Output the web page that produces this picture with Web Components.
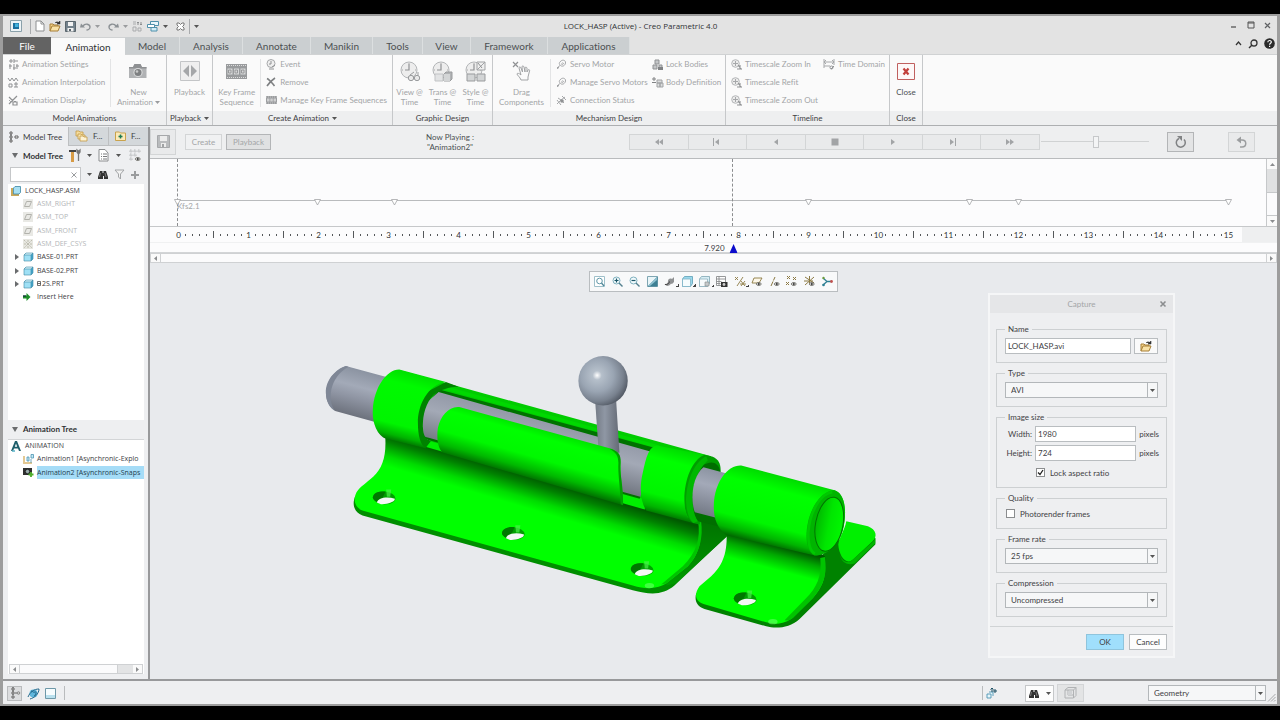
<!DOCTYPE html>
<html lang="en">
<head>
<meta charset="utf-8">
<title>LOCK_HASP (Active) - Creo Parametric 4.0</title>
<style>
html,body{margin:0;height:100%}
body{background:#000;font:8px/10px Lato,"Open Sans",sans-serif;font-variant-ligatures:none;color:#3e4144}
</style>
</head>
<body>
<creo-app></creo-app>
<script>
const RESET = `:host,*{box-sizing:border-box}button,input,select{font:inherit;color:inherit;margin:0;padding:0;border:0;border-radius:0;background:none;outline:0}button{cursor:default;white-space:nowrap}`;

function define(name, css, html) {
  customElements.define(name, class extends HTMLElement {
    connectedCallback() {
      if (this.shadowRoot) return;
      const root = this.attachShadow({ mode: 'open' });
      root.innerHTML = `<style>${RESET}${css}</style>${typeof html === 'function' ? html(this) : html}`;
    }
  });
}

/* ---------- icons: [width, height, svg body] ---------- */
const G = '#a6a8aa';
const clock = `<circle cx="9" cy="9" r="8" fill="#ededed" stroke="#b4b6b8"/><path d="M9 3v6H5" fill="none" stroke="#8f9193" stroke-width="1.2"/><path d="M9 2v1M9 15v1M2 9h1M15 9h1" stroke="#aaa"/>`;
const zoomT = `<circle cx="4.500" cy="4.500" r="3.800" fill="#ececec" stroke="#b4b6b8"/><path d="M2 4.500h5M4.500 2v5" stroke="#a6a8aa" fill="none"/><path d="M6 10h5M7 6l3.500 4.500M9 6v4" stroke="#8f9193" stroke-width="1.100"/>`;
const motor = `<path d="M4 3c2-3 6-2 5.500 1S6 8 4.500 6.500 3 4 4 3zM1 9l3-2.500M5.500 4.500c1-1 2-.5 2 0s-1 1.500-2 1" fill="none" stroke="${G}"/><path d="M1 9.500l2-1" stroke="#8f9193"/>`;
const partCube = `<path d="M1 3l2-2h7v6l-2 2H1z" fill="#45a9cf"/><path d="M1 3h7v6H1z" fill="#9fe0f5"/><path d="M1 3l2-2h7L8 3z" fill="#d5f4fc"/><path d="M1 3l2-2h7v6l-2 2H1zM1 3h7v6M8 3l2-2" fill="none" stroke="#3d86a3" stroke-width=".6"/>`;
const plane = `<path d="M0 0h10v10H0z" fill="#e9e9e5"/><path d="M3.500 2.500h5L6.500 7.500h-5z" fill="none" stroke="#b2b2ac"/>`;
const lens = s => `<circle cx="4.500" cy="4.500" r="3.500" fill="#f2fbfd" stroke="#7fb0bf"/><path d="M7 7l3.500 3.500" stroke="#54818f" stroke-width="1.400"/><path d="${s}" stroke="#1b5668" stroke-width="1.200"/>`;
const eye = (x, y) => `<g transform="translate(${x} ${y})"><path d="M0 2C1.500 0 4 0 5.500 2 4 4 1.500 4 0 2z" fill="#fff" stroke="#4a4a42" stroke-width=".8"/><circle cx="2.800" cy="2" r="1.100" fill="#333"/></g>`;
const folder = `<path d="M1 10V3h3l1 1h4v2" fill="#f4d389" stroke="#a77f36"/><path d="M1 10l2-5h8l-2 5z" fill="#f9e2a6" stroke="#a77f36"/><path d="M6 2c1-1.500 3-1.500 4.500 0M11 0v3H8z" stroke="#333" fill="#333" stroke-width=".6"/>`;
const binoc = `<path d="M2 2h2.500v2h1V2H8l2 6v2H6V7H5v3H0V8z" fill="#333"/><path d="M2.500 4l-1 4M7 4l1 4" stroke="#8a8a8a" stroke-width=".8"/>`;
const cam = `<path d="M1 5h4l1.500-3h6L14 5h4.500v11H1z" fill="#b0b2b4"/><path d="M1 5h4l1.500-3h6L14 5h4.500v1.500H1z" fill="#8e9092"/><circle cx="10" cy="10.500" r="4.600" fill="#d9dadb"/><circle cx="10" cy="10.500" r="3.500" fill="#7e8082"/><circle cx="9" cy="9.500" r="1.300" fill="#c9cacb"/>`;
const ICONS = {
  app: [12, 12, `<path d="M.5.5h11v11H.5z" fill="#eef4f7" stroke="#8aa0aa"/><path d="M3 3h6v6H3z" fill="#1b6f9e"/><path d="M5 3.500h3.500V7H5z" fill="#43b3de"/>`],
  new: [10, 12, `<path d="M1 1h5l3 3v7H1z" fill="#fff" stroke="#8d8f91"/><path d="M6 1v3h3" fill="none" stroke="#8d8f91"/>`],
  folder: [12, 11, folder],
  save: [11, 11, `<path d="M.5.5h10v10H.500z" fill="#74828c" stroke="#5b666d"/><path d="M3 1h5v4H3zM2.500 7h6v3.500h-6z" fill="#f2f2f2"/><path d="M4 8h2v2H4z" fill="#5b666d"/>`],
  saveoff: [13, 13, `<path d="M.5.5h12v12H.500z" fill="#b9bbbd" stroke="#a6a8aa"/><path d="M3 1h7v5H3zM4 8h5v4H4z" fill="#ececec"/><path d="M5 9h2v3H5z" fill="#a0a2a4"/>`],
  undo: [11, 9, `<path d="M3 4C5 1 10 2 10 5c0 2-2 3-3.500 3" fill="none" stroke="#8b9094" stroke-width="1.400"/><path d="M0 4h5L1 0z" fill="#8b9094" transform="translate(0 1.500)"/>`],
  redo: [11, 9, `<path d="M8 4C6 1 1 2 1 5c0 2 2 3 3.500 3" fill="none" stroke="#8b9094" stroke-width="1.400"/><path d="M11 5.500H6L10 1.500z" fill="#8b9094"/>`],
  regen: [11, 11, `<path d="M1 1h3M1 3h3M1 6h3v4H1zM6 7h3v3H6z" stroke="#a9abad" fill="none"/><path d="M6 4V1M5 2l1-1 1 1M9 1v3M8 3l1 1 1-1" stroke="#8b8d8f" fill="none"/>`],
  windows: [12, 11, `<path d="M3.500.500h8v4h-8z" fill="#eaf6fb" stroke="#4f90ab"/><path d="M.5 3.500h7v3h-7z" fill="#fff" stroke="#4f90ab"/><path d="M4 6.500h6V10H4z" fill="#d2edf7" stroke="#4f90ab"/>`],
  closewin: [9, 9, `<path d="M1 3V1h2l1.500 1.500L6 1h2v2L6.500 4.500 8 6v2H6L4.500 6.500 3 8H1V6l1.500-1.500z" fill="#fff" stroke="#777"/>`],
  caret: [5, 3, `<path d="M0 0h5L2.500 3z" fill="#555"/>`],
  caretoff: [5, 3, `<path d="M0 0h5L2.500 3z" fill="#9a9c9e"/>`],
  min: [8, 8, `<path d="M1 6h5" stroke="#555" stroke-width="1.300"/>`],
  max: [8, 8, `<path d="M1 1h6v6H1zM1 2h6" fill="none" stroke="#555"/>`],
  x: [7, 7, `<path d="M1 1l5 5M6 1L1 6" stroke="#606264" stroke-width="1.200"/>`],
  xthin: [6, 6, `<path d="M.5.500l5 5M5.500.500l-5 5" stroke="#9a9c9e"/>`],
  xbold: [6, 6, `<path d="M.5.500l5 5M5.500.500l-5 5" stroke="#8b8d8f" stroke-width="1.600"/>`],
  up: [7, 5, `<path d="M1 4l2.500-3L6 4" fill="none" stroke="#333" stroke-width="1.200"/>`],
  lens: [10, 10, `<circle cx="6" cy="4" r="3" fill="none" stroke="#333" stroke-width="1.300"/><path d="M4 6L1 9" stroke="#333" stroke-width="1.500"/>`],
  help: [11, 11, `<circle cx="5.500" cy="5.500" r="5.300" fill="#2b2b2b"/><path d="M3.800 4.300c0-2.400 3.500-2.300 3.500-.3 0 1.300-1.700 1.300-1.700 2.700M5.600 7.700v1.300" fill="none" stroke="#fff" stroke-width="1.200"/>`],
  settings: [11, 11, `<path d="M1 2h4M3 0v4M6 0v4M6 2h4M2 5v5M1 7h3M6 5v6M5 9h3M9 5v5M8 7h3" stroke="#8f9193" fill="none"/>`],
  interp: [11, 11, `<path d="M0 1l2 3 2-3 2 3 2-3 2 3M1 7h3v3H1zM6 7h4M6 10h4M8 5v5" stroke="#8f9193" fill="none"/>`],
  display: [11, 11, `<path d="M1 9l8-8M1 2l4 4M5 10V7h4v3zM6 6.500h2" stroke="#8f9193" fill="none" stroke-width="1.200"/><path d="M1 5l2 2" stroke="${G}"/>`],
  camera: [20, 18, cam],
  playback: [20, 20, `<path d="M.5.5h19v19H.500z" fill="#efefef" stroke="#c3c5c7"/><path d="M9 4v12L3 10zM11 4v12l6-6z" fill="#a5a7a9"/>`],
  keyframes: [21, 15, `<path d="M0 0h21v15H0z" fill="#999b9d"/><path d="M1 1.500h19M1 13.500h19" stroke="#ddd" stroke-dasharray="1 1"/><path d="M1.500 4.500h5v6h-5zM8 4.500h5v6H8zM14.500 4.500h5v6h-5z" fill="#d6d7d8"/><path d="M2.500 6h2.500v3H2.500zM9 6h2.500v3H9zM15.500 6H18v3h-2.500z" fill="none" stroke="#8a8c8e" stroke-width=".8"/>`],
  event: [11, 11, `<circle cx="5" cy="4.500" r="4" fill="#efefef" stroke="${G}"/><path d="M5 2v3H3M3 10h5M6 8l3-2" stroke="#8f9193" fill="none"/>`],
  remove: [10, 10, `<path d="M1 1.500C4 3 6 6 8.500 9M9 1C6 3 3 6 1 9" stroke="#7e8082" stroke-width="1.600" fill="none"/>`],
  managekf: [11, 8, `<path d="M0 0h11v8H0z" fill="#9b9d9f"/><path d="M1 2.500h2.500v3H1zM4.300 2.500h2.500v3H4.300zM7.600 2.500H10v3H7.600z" fill="#cfd0d1"/><path d="M0 1h11M0 7h11" stroke="#c5c6c7" stroke-dasharray="1 1"/>`],
  viewtime: [20, 21, clock + `<circle cx="11" cy="17" r="2.700" fill="#e9e9e9" stroke="#999b9d"/><circle cx="17" cy="17" r="2.700" fill="#e9e9e9" stroke="#999b9d"/><path d="M10 14l4-3M18 14v-3" stroke="#999b9d" fill="none"/>`],
  transtime: [21, 21, clock + `<path d="M3 13h8v7H3z" fill="#e2e3e4" stroke="#c1c3c5"/><path d="M12 13l2-2h6v7l-2 2h-6z" fill="#b1b3b5" stroke="#999b9d"/><path d="M12 13h6v7h-6z" fill="#d3d5d6"/>`],
  styletime: [21, 21, clock + `<path d="M12 1h8v8h-8zM12 9l8-8" fill="#efefef" stroke="#a1a3a5"/><path d="M2 13h8v7H2zM12 13h8v7h-8z" fill="#d3d5d6" stroke="#999b9d"/><path d="M13 2l4 5" stroke="#8f9193"/>`],
  drag: [19, 20, `<path d="M1 1l5 5M6 1L1 6" stroke="#8f9193" stroke-width="1.200"/><path d="M9 19c-1-3-4-5-4-6s2-1 4 1L7 7c0-1.500 1.500-1.500 2 0l1.500 4L10 6c0-1.500 1.500-1.500 2 0l1 5 0-4c.500-1.500 1.500-1 2 0v4l1-2c1-1 2 0 1.500 1L16 16v3z" fill="#fbfbfb" stroke="#a1a3a5"/>`],
  motor: [11, 10, motor],
  connect: [11, 11, `<path d="M1 9l4-4 4-3M2 3l3 2 3 3M6 1l4 4M1 5l4 5" stroke="${G}" fill="none"/><circle cx="6" cy="6" r="1.800" fill="#8f9193"/>`],
  lockb: [11, 11, `<path d="M3 1h4v4H3zM1 6h4v4H1zM7 6h3v3H7z" fill="#c4c6c8" stroke="#8f9193"/><path d="M6 8h5v3H6z" fill="#808284"/>`],
  bodydef: [11, 11, `<path d="M2 0v4M0 2h4M0 5.500h4" stroke="#808284"/><path d="M5 3h5v3H5zM5 6h3v4H5zM8 6h3v4H8z" fill="#dcdddd" stroke="#a1a3a5"/>`],
  zoomt: [11, 11, zoomT],
  domain: [12, 11, `<path d="M1 0v9M11 0v6M1 3h10M3 1L1 3l2 2M9 1l2 2-2 2M1 7h6" stroke="${G}" fill="none"/><path d="M8 10l3-3" stroke="#8f9193"/><circle cx="8.500" cy="8.500" r="1.500" fill="none" stroke="#8f9193"/>`],
  closered: [18, 17, `<path d="M.5.5h17v16H.500z" fill="#fdf8f8" stroke="#c0605f"/><path d="M6.500 5.500l5 6M11.500 5.500l-5 6" stroke="#c2403c" stroke-width="2.200"/>`],
  modeltab: [10, 12, `<path d="M1 1h2v2H1zM1 5h2v2H1zM1 9h2v2H1zM6 5h3v2H6zM2 3v2M2 7v2" fill="#fff" stroke="#555" stroke-width=".9"/>`],
  layers: [13, 12, `<path d="M1 1h3l1 1h3v4H1z" fill="#f5dc9c" stroke="#c39a45" stroke-width=".8"/><path d="M3 4h3l1 1h3v4H3z" fill="#f9e6b4" stroke="#c39a45" stroke-width=".8"/><path d="M5 6h3l1 1h3v4H5z" fill="#fdf2d2" stroke="#c39a45" stroke-width=".8"/>`],
  fav: [11, 10, `<path d="M.5 1h4l1 1h5v7.500H.500z" fill="#fbeab8" stroke="#c9a24c"/><path d="M5.500 3.500v4M3.500 5.500h4" stroke="#1d7a52" stroke-width="1.500"/>`],
  tools: [12, 13, `<path d="M0 3V1h7v2z" fill="#444"/><path d="M2 3h3v10H2z" fill="#d79b45"/><path d="M9.500 12V5L8 3V1l1.500 1.500L11 1v2L9.500 5" fill="#777" stroke="#777" stroke-width="1.300"/>`],
  filt: [12, 13, `<path d="M1 .5h6L10 4v8H1z" fill="#fff" stroke="#8b8d8f"/><path d="M3 5h1M5 5h4M3 7.500h1M5 7.500h4M3 10h1M5 10h4" stroke="#6a6c6e" stroke-width=".9"/>`],
  treecfg: [13, 13, `<path d="M1 1h2v2H1zM1 5h2v2H1zM1 9h2v2H1zM5 1h2v2H5zM9 1h2v2H9zM5 5h2v2H5z" fill="none" stroke="#aaacae" stroke-width=".8" stroke-dasharray="1 .5"/>${eye(6, 8)}`],
  binoc: [10, 11, binoc],
  funnel: [11, 11, `<path d="M1 1h9L6.500 5v5l-2-2V5z" fill="#f2f2f2" stroke="#a3a5a7"/>`],
  plus: [8, 8, `<path d="M4 0v8M0 4h8" stroke="#9a9c9e" stroke-width="2"/>`],
  asm: [10, 10, `<path d="M1 2v7h7" fill="none" stroke="#c9a85a" stroke-width="2"/><path d="M2.500 2l1.500-1.500h5.500v6L8 8H2.500z" fill="#a7dff2" stroke="#3d86a3" stroke-width=".8"/>`],
  plane: [10, 10, plane],
  csys: [10, 10, `<path d="M0 0h10v10H0z" fill="#e7e7e1"/><path d="M1 1l8 8M9 1L1 9M5 1v8M1 5h8" stroke="#b9b8aa" stroke-width=".9" stroke-dasharray="2 1"/>`],
  part: [10, 10, partCube],
  insert: [8, 8, `<path d="M0 2.500h3.500V0l4 4-4 4V5.500H0z" fill="#1f8f2a"/><path d="M0 2.500h3v1H0z" fill="#114"/>`],
  tri: [6, 6, `<path d="M1 0l4 3-4 3z" fill="#6a6c6e"/>`],
  tridown: [7, 5, `<path d="M0 0h6L3 5z" fill="#6a6c6e"/>`],
  flag: [4, 5, `<path d="M.5.5h3v4h-3zM.5 2.500h3" fill="none" stroke="#333" stroke-width=".7"/>`],
  anim: [10, 10, `<path d="M0 10L4 0h2l4 10H8L7 7.500H3L2 10zM3.800 5.800h2.400L5 2.500z" fill="#1f5f6b"/><path d="M1 10h3" stroke="#56b1c6" stroke-width="1.500"/>`],
  explode: [11, 11, `<path d="M1 2v7h8" fill="none" stroke="#e3c893" stroke-width="2"/><path d="M4 3h2v4H4zM8 .500h2.500V4H8zM8 5v4" fill="#c5e9f5" stroke="#4c94b3" stroke-width=".8"/>`],
  snap: [11, 11, `<path d="M0 1h9v7H0z" fill="#2f2f2f"/><circle cx="4.500" cy="4.500" r="2.200" fill="#9aa" stroke="#000" stroke-width=".6"/><path d="M8 5v5M5.500 7.500h5" stroke="#4fae2c" stroke-width="1.800"/>`],
  rewind: [10, 8, `<path d="M5 1v6L1 4zM9 1v6L5 4z" fill="#a2a4a6"/>`],
  tostart: [10, 8, `<path d="M1 0h1v8H1zM7 1v6L3 4z" fill="#a2a4a6"/>`],
  back: [10, 8, `<path d="M7 1v6L3 4z" fill="#a2a4a6"/>`],
  stop: [8, 8, `<path d="M.5.5h7v7h-7z" fill="#a2a4a6"/>`],
  play: [10, 8, `<path d="M3 1v6l4-3z" fill="#a2a4a6"/>`],
  toend: [10, 8, `<path d="M8 0h1v8H8zM3 1v6l4-3z" fill="#a2a4a6"/>`],
  ffwd: [10, 8, `<path d="M1 1v6l4-3zM5 1v6l4-3z" fill="#a2a4a6"/>`],
  loop: [12, 13, `<path d="M4 3.500a4.500 4.500 0 1 0 5 1" fill="none" stroke="#808284" stroke-width="1.500"/><path d="M2 1h5v5z" fill="#808284"/>`],
  loopback: [13, 12, `<path d="M3 4h4c5 0 5 7 0 7H5" fill="none" stroke="#9b9d9f" stroke-width="1.500"/><path d="M6 .5v7L1.500 4z" fill="#9b9d9f"/>`],
  refit: [11, 11, `<path d="M.5.5h10v10H.500z" fill="#fff" stroke="#9fc0ca"/><circle cx="5.500" cy="5" r="2.800" fill="none" stroke="#5f97a8"/><path d="M7.500 7l2.500 3" stroke="#4f8798" stroke-width="1.300"/>`],
  zin: [11, 11, lens('M2.500 4.500h4M4.500 2.500v4')],
  zout: [11, 11, lens('M2.500 4.500h4')],
  repaint: [11, 11, `<path d="M.5.5h10v10H.500z" fill="#e9f5f8" stroke="#7fa6b3"/><path d="M10.500.500v10H.500z" fill="#3d7f93"/><path d="M10 1v3L3 10H1z" fill="#8dc0cf"/>`],
  shade: [11, 11, `<path d="M0 8c3 1 4-1 4-3s2-3 4-2l2-2v5L8 8C6 7 7 10 3 10z" fill="#8f9193"/><path d="M1 8.500c3 0 4-1 4.500-3" stroke="#444" fill="none"/>`],
  display3: [11, 11, `<path d="M.5 3l2-2.500h8v7l-2 3h-8z" fill="#9ad8ec" stroke="#5d9eb5" stroke-width=".8"/><path d="M.5 3h8v7.500h-8z" fill="#f5fcfe" stroke="#7db3c6" stroke-width=".8"/>`],
  orient: [11, 11, `<path d="M.5 3l2-2.500h8v7l-2 3h-8z" fill="#d8eef5" stroke="#7fa6b3" stroke-width=".8"/><path d="M.5 3h8v7.500h-8z" fill="#f7fbfc" stroke="#8fb3bf" stroke-width=".8"/><path d="M6 6h4v4H6z" fill="#c5c9cb" stroke="#85898b" stroke-width=".6"/>`],
  viewmgr: [12, 11, `<path d="M.5.5h9v9h-9zM.5 3h9M.5 5.500h5M.5 7.500h4M3 .500v9" fill="#fff" stroke="#8b8d8f" stroke-width=".9"/><path d="M5 6h6.500v5H5z" fill="#333"/><circle cx="8" cy="8.500" r="1.400" fill="#ccc"/>`],
  datum: [12, 11, `<path d="M1 1l3 3M4 1L1 4M3 10L9 1M6 8h6M7 5l4 5M11 5l-4 5" stroke="#8c7a44" fill="none" stroke-width=".9"/>`],
  dplane: [12, 11, `<path d="M3 2h8L8 7H1z" fill="#fdf8ea" stroke="#8c7a44" stroke-width=".9"/>${eye(5, 6)}`],
  daxis: [12, 11, `<path d="M2 10L6 1" stroke="#8c7a44" stroke-dasharray="5 1"/>${eye(5, 6)}`],
  dpoint: [12, 11, `<path d="M1 0l3 3M4 0L1 3M7 1l3 3M10 1L7 4M0 6l3 3M3 6L0 9" stroke="#8c7a44" fill="none"/>${eye(5, 6)}`],
  dcsys: [12, 11, `<path d="M1 1l9 6M10 1L1 9M5.500 0v7M0 5h9" stroke="#8c7a44" fill="none"/>${eye(5, 6)}`],
  spin: [11, 11, `<path d="M1 2l4 3.500L1 9M5 5.500h4" stroke="#2d7f93" stroke-width="1.300" fill="none"/><circle cx="9.500" cy="5.500" r="1.400" fill="#c0504d"/><circle cx="1.500" cy="9" r="1.300" fill="#2d7f93"/><circle cx="1.500" cy="2" r="1.200" fill="#6a9a3b"/>`],
  globe: [11, 11, `<circle cx="5.500" cy="5.500" r="4" fill="#5fb6dc"/><path d="M3 3c2 0 2 2 4 1s1 3-1 4M0 9C2 4 6 1 11 1c0 5-5 9-9 10" fill="none" stroke="#22678a"/>`],
  panel: [11, 11, `<path d="M.5.5h10v10H.500z" fill="#f6fcfe" stroke="#6e98a8"/><path d="M1 7h9v3H1z" fill="#b9e0ee"/>`],
  bar: [12, 12, `<path d="M4 0v12" stroke="#777" stroke-dasharray="2 1"/><path d="M3 1h2v2H3zM3 5h2v2H3zM3 9h2v2H3z" fill="#fff" stroke="#444" stroke-width=".8"/><path d="M6 6h2" stroke="#666"/><circle cx="9.500" cy="6" r="1.300" fill="#ccc" stroke="#777" stroke-width=".8"/>`],
  sel: [11, 11, `<path d="M1 6h4v4H1zM3 4h4v4" fill="#e5f5fa" stroke="#4c94b3" stroke-width=".9"/><path d="M6 0v4M4.500 1.500L6 0l1.500 1.500M9 1v4M7 3h4" stroke="#1d4f63" fill="none"/>`],
  box3: [13, 12, `<path d="M1 3l3-2.500h8v8L9.500 11H1zM1 3h8.500v8M9.500 3L12 .500M4 3v5h5" fill="none" stroke="#b0b2b4"/><path d="M4 4h4v4H4z" fill="#d0d2d4"/>`],
  grip: [8, 8, `<path d="M7.500 0L0 7.500M7.500 3L3 7.500M7.500 6L6 7.500" stroke="#a5a7a9"/>`]
};
define('ui-icon', `:host{display:inline-block;flex:none;line-height:0}svg{display:block;overflow:visible}`, el => {
  const [w, h, body] = ICONS[el.getAttribute('name')];
  return `<svg width="${w}" height="${h}" viewBox="0 0 ${w} ${h}" aria-hidden="true">${body}</svg>`;
});

/* ---------- title bar and tabs ---------- */
define('title-bar', `
:host{display:grid;grid-template-columns:1fr auto 1fr;align-items:center;height:21px;background:#e3e3e3;padding:0 6px 1px 7px}
.quick,.win{display:flex;align-items:center}
.quick button{display:flex}
.quick i{width:1px;height:15px;background:#a9abad}
.quick .g4{margin-right:4px}.quick .g8{margin-right:8px}
.win{justify-content:flex-end;gap:9px}
h1{margin:0;font-family:"Open Sans",sans-serif;font-size:8px;line-height:12px;font-weight:400;color:#2f3133}`, `
<div class="quick">
 <button class="g8" aria-label="Application menu"><ui-icon name="app"></ui-icon></button><i></i>
 <button class="g4" style="margin-left:4px" aria-label="New"><ui-icon name="new"></ui-icon></button>
 <button class="g4" aria-label="Open"><ui-icon name="folder"></ui-icon></button>
 <button class="g4" aria-label="Save"><ui-icon name="save"></ui-icon></button>
 <button class="g4" aria-label="Undo"><ui-icon name="undo"></ui-icon></button>
 <button class="g8" aria-label="Undo list"><ui-icon name="caretoff"></ui-icon></button>
 <button class="g4" aria-label="Redo"><ui-icon name="redo"></ui-icon></button>
 <button class="g4" aria-label="Redo list"><ui-icon name="caretoff"></ui-icon></button>
 <button class="g4" aria-label="Regenerate"><ui-icon name="regen"></ui-icon></button>
 <button class="g4" aria-label="Windows"><ui-icon name="windows"></ui-icon></button>
 <button class="g8" aria-label="Windows list"><ui-icon name="caret"></ui-icon></button>
 <button class="g4" aria-label="Close window"><ui-icon name="closewin"></ui-icon></button><i></i>
 <button style="margin-left:4px" aria-label="Customize"><ui-icon name="caret"></ui-icon></button>
</div>
<h1>LOCK_HASP (Active) - Creo Parametric 4.0</h1>
<div class="win"><button aria-label="Minimize"><ui-icon name="min"></ui-icon></button><button aria-label="Maximize"><ui-icon name="max"></ui-icon></button><button aria-label="Close"><ui-icon name="x"></ui-icon></button></div>`);

const TABS = [['File', 48, 'file'], ['Animation', 74, 'on'], ['Model', 55], ['Analysis', 63], ['Annotate', 68], ['Manikin', 62], ['Tools', 50], ['View', 48], ['Framework', 77], ['Applications', 82]];
define('ribbon-tabs', `
:host{display:flex;height:18px;background:#e3e3e3;border-bottom:1px solid #d0d2d3}
nav button{height:17px;background:#cbcfd1;border-right:1px solid #dcdfe0;font-size:10px;line-height:16px;color:#4b4f52}
nav .file{background:#636363;color:#fff;border:0}nav .on{height:18px;background:#fafafa;color:#2f3133;border:0;border-top:1px solid #d0d2d3}
nav{display:flex;flex:1;height:17px}
.tools{display:flex;align-items:center;gap:6px;padding:0 2px 4px 0}.tools button{height:11px;display:flex;align-items:center}`,
`<nav role="tablist">${TABS.map(([t, w, c]) => `<button role="tab" class="${c || ''}" style="width:${w}px">${t}</button>`).join('')}</nav>
<div class="tools"><button aria-label="Minimize ribbon"><ui-icon name="up"></ui-icon></button><button aria-label="Search"><ui-icon name="lens"></ui-icon></button><button aria-label="Help"><ui-icon name="help"></ui-icon></button></div>`);

/* ---------- ribbon ---------- */
define('ribbon-command', `
:host{display:block;color:#a3a5a7}
:host([live]){color:#4b4f52}
button{display:flex;align-items:center;gap:3px;height:18px}
ui-icon{min-width:11px}
:host([big]) button{flex-direction:column;width:100%;height:56px;gap:0;justify-content:flex-start}
.art{display:flex;align-items:center;justify-content:center;height:26px;margin:3px 0}
.text{display:flex;align-items:center;gap:2px}`,
  el => el.hasAttribute('big')
    ? `<button><span class="art"><ui-icon name="${el.getAttribute('icon')}"></ui-icon></span>${el.textContent.split('|').map((t, i, a) => `<span class="text">${t}${el.hasAttribute('menu') && i === a.length - 1 ? '<ui-icon style="min-width:5px" name="caretoff"></ui-icon>' : ''}</span>`).join('')}</button>`
    : `<button><ui-icon name="${el.getAttribute('icon')}"></ui-icon><span>${el.textContent}</span></button>`);
define('ribbon-group', `
:host{display:flex;flex-direction:column;flex:none;border-right:1px solid #c6c8ca}
.body{display:flex;height:56px}
.name{display:flex;align-items:center;justify-content:center;gap:3px;height:14px;background:#eeeff0;color:#3e4144}`,
  el => `<div class="body"><slot></slot></div><div class="name">${el.getAttribute('label')}${el.hasAttribute('menu') ? '<ui-icon name="caret"></ui-icon>' : ''}</div>`);
define('ribbon-bar', `
:host{display:flex;background:linear-gradient(#fafafa 56px,#eeeff0 56px);border-bottom:1px solid #adafb1;height:71px}
.col{padding:0 5px}.line{width:1px;background:#e3e4e5;margin:4px 0}`, `
<ribbon-group label="Model Animations" style="width:164px">
 <div class="col" style="width:107px"><ribbon-command icon="settings">Animation Settings</ribbon-command><ribbon-command icon="interp">Animation Interpolation</ribbon-command><ribbon-command icon="display">Animation Display</ribbon-command></div><div class="line"></div>
 <ribbon-command big menu icon="camera" style="width:56px">New|Animation</ribbon-command>
</ribbon-group>
<ribbon-group label="Playback" menu style="width:46px"><ribbon-command big icon="playback" style="width:45px">Playback</ribbon-command></ribbon-group>
<ribbon-group label="Create Animation" menu style="width:180px">
 <ribbon-command big icon="keyframes" style="width:48px">Key Frame|Sequence</ribbon-command><div class="line"></div>
 <div class="col"><ribbon-command icon="event">Event</ribbon-command><ribbon-command icon="remove">Remove</ribbon-command><ribbon-command icon="managekf">Manage Key Frame Sequences</ribbon-command></div>
</ribbon-group>
<ribbon-group label="Graphic Design" style="width:100px"><ribbon-command big icon="viewtime" style="width:33px">View @|Time</ribbon-command><ribbon-command big icon="transtime" style="width:33px">Trans @|Time</ribbon-command><ribbon-command big icon="styletime" style="width:33px">Style @|Time</ribbon-command></ribbon-group>
<ribbon-group label="Mechanism Design" style="width:233px">
 <ribbon-command big icon="drag" style="width:57px">Drag|Components</ribbon-command><div class="line"></div>
 <div class="col" style="width:101px"><ribbon-command icon="motor">Servo Motor</ribbon-command><ribbon-command icon="motor">Manage Servo Motors</ribbon-command><ribbon-command icon="connect">Connection Status</ribbon-command></div>
 <div><ribbon-command icon="lockb">Lock Bodies</ribbon-command><ribbon-command icon="bodydef">Body Definition</ribbon-command></div>
</ribbon-group>
<ribbon-group label="Timeline" style="width:164px">
 <div class="col" style="width:97px"><ribbon-command icon="zoomt">Timescale Zoom In</ribbon-command><ribbon-command icon="zoomt">Timescale Refit</ribbon-command><ribbon-command icon="zoomt">Timescale Zoom Out</ribbon-command></div>
 <div><ribbon-command icon="domain">Time Domain</ribbon-command></div>
</ribbon-group>
<ribbon-group label="Close" style="width:33px"><ribbon-command big live icon="closered" style="width:32px">Close</ribbon-command></ribbon-group>`);

/* ---------- scrollbars ---------- */
define('h-scroll', `
:host{display:flex;height:10px;background:#e3e4e5;border:1px solid #cfd1d3}
span{width:9px;background:#fafafa;display:flex;align-items:center;justify-content:center}
b{flex:var(--thumb,1) 0 0;background:#fbfbfc;border:solid #cfd1d3;border-width:0 1px}i{flex:var(--rest,0) 0 0}`,
`<span><svg width="3" height="5"><path d="M3 0v5L0 2.500z" fill="#8b8d8f"/></svg></span><b></b><i></i><span><svg width="3" height="5"><path d="M0 0v5L3 2.500z" fill="#8b8d8f"/></svg></span>`);

/* ---------- side panel ---------- */
define('tree-item', `
:host{display:flex;align-items:center;gap:3px;white-space:nowrap;padding-left:3px;color:#3e4144;font-family:"Open Sans",sans-serif;font-size:7px}
:host([level="1"]){padding-left:6px}
:host([dim]){color:#b3b5b7}
.tw{width:6px;display:flex;flex:none}ui-icon.ic{width:11px}
.t{display:flex;align-items:center;gap:1px;height:13px;flex:none}
:host([selected]) .t{background:#a5dcf7;color:#23404e;flex:1}`,
  el => `${el.getAttribute('level') ? `<span class="tw">${el.hasAttribute('closed') ? '<ui-icon name="tri"></ui-icon>' : ''}</span>` : ''}<ui-icon class="ic" name="${el.getAttribute('icon')}"></ui-icon><span class="t">${el.hasAttribute('flag') ? '<ui-icon name="flag"></ui-icon>' : ''}<slot></slot></span>`);
define('side-panel', `
:host{display:flex;flex-direction:column;width:147px;flex:none;background:#eeeff1;border-right:2px solid #98999b;padding:0}
.tabs{display:flex;height:19px}
.tabs button{display:flex;align-items:center;gap:5px;padding-left:6px;width:40px;background:#d4d8db;border:solid #bdbfc1;border-width:0 0 1px 1px}
.tabs .on{width:65px;background:#eeeff1;border:0;gap:4px}
.head{display:flex;align-items:center;height:19px;padding:0 4px 0 9px;gap:6px}
.head h2{margin:0 0 0 -2px;font-size:8px;line-height:10px;font-weight:700;color:#2f3133;white-space:nowrap}
.head button,.find button{display:flex;align-items:center}
.find{display:flex;align-items:center;height:19px;padding:0 9px 0 7px;justify-content:space-between}
.box{display:flex;align-items:center;width:71px;height:15px;background:#fff;border:1px solid #c5c7c9;padding-right:3px}
.box input{flex:1;min-width:0;height:12px}
.tree{background:#fff;margin:0 4px 0 5px;display:flex;flex-direction:column}
.rows{display:grid;grid-auto-rows:1fr}
.model{flex:235 0 0}.model .rows{height:120px}
.anim{flex:234 0 0;border-top:1px solid #d3d5d7;margin-bottom:5px}.anim .rows{height:40px}
h-scroll{margin:auto 1px 0;--thumb:100;--rest:15}`, `
<div class="tabs" role="tablist"><button class="on" role="tab"><ui-icon name="modeltab"></ui-icon>Model Tree</button><button role="tab"><ui-icon name="layers"></ui-icon>F...</button><button role="tab"><ui-icon name="fav"></ui-icon>F...</button></div>
<div class="head"><ui-icon name="tridown"></ui-icon><h2>Model Tree</h2><button aria-label="Settings"><ui-icon name="tools"></ui-icon></button><button aria-label="Settings list"><ui-icon name="caret"></ui-icon></button><button aria-label="Show"><ui-icon name="filt"></ui-icon></button><button aria-label="Show list"><ui-icon name="caret"></ui-icon></button><button aria-label="Columns" style="margin-left:2px"><ui-icon name="treecfg"></ui-icon></button></div>
<div class="find"><div class="box"><input type="text" aria-label="Search tree"><button aria-label="Clear"><ui-icon name="xthin"></ui-icon></button></div><button aria-label="Search options"><ui-icon name="caret"></ui-icon></button><button aria-label="Find"><ui-icon name="binoc"></ui-icon></button><button aria-label="Filter"><ui-icon name="funnel"></ui-icon></button><button aria-label="Add"><ui-icon name="plus"></ui-icon></button></div>
<div class="tree model"><div class="rows">
<tree-item icon="asm">LOCK_HASP.ASM</tree-item>
<tree-item level="1" dim icon="plane">ASM_RIGHT</tree-item><tree-item level="1" dim icon="plane">ASM_TOP</tree-item><tree-item level="1" dim icon="plane">ASM_FRONT</tree-item><tree-item level="1" dim icon="csys">ASM_DEF_CSYS</tree-item>
<tree-item level="1" closed icon="part">BASE-01.PRT</tree-item><tree-item level="1" closed icon="part">BASE-02.PRT</tree-item><tree-item level="1" closed flag icon="part">2S.PRT</tree-item><tree-item level="1" icon="insert">Insert Here</tree-item></div></div>
<div class="head"><ui-icon name="tridown"></ui-icon><h2>Animation Tree</h2></div>
<div class="tree anim"><div class="rows"><tree-item icon="anim">ANIMATION</tree-item><tree-item level="1" icon="explode">Animation1 [Asynchronic-Explo</tree-item><tree-item level="1" selected icon="snap">Animation2 [Asynchronic-Snaps</tree-item></div><h-scroll></h-scroll></div>`);

/* ---------- playback bar ---------- */
define('playback-bar', `
:host{display:flex;align-items:center;height:32px;background:#eeeff0;border-bottom:1px solid #b9bbbd;padding:0 22px 2px 0}
button{display:flex;align-items:center;justify-content:center;border:1px solid #d3d5d6;background:#e9eaeb;color:#a3a5a7;height:16px}
.save{width:26px;height:26px}.txt{width:37px;margin-left:9px;background:#f0f1f2}.txt.on{width:45px;margin-left:4px;background:#e0e1e2;border-color:#b3b5b7}
p{margin:0;flex:1;text-align:center;line-height:10px;color:#4b4f52}
.player{display:flex;width:411px}.player button{flex:1}.player button+button{border-left:0}
input{appearance:none;width:108px;height:16px;margin:0 18px 0 1px;background:linear-gradient(#d0d2d3,#d0d2d3) center/100% 1px no-repeat}
input::-webkit-slider-thumb{appearance:none;width:6px;height:12px;background:#f3f4f5;border:1px solid #c6c8ca}
.loop{width:27px;height:20px;border-color:#b3b5b7;background:#e3e4e5}.rev{width:27px;height:20px;margin-left:34px}`, `
<button class="save" aria-label="Save"><ui-icon name="saveoff"></ui-icon></button><button class="txt">Create</button><button class="txt on">Playback</button>
<p>Now Playing :<br>"Animation2"</p>
<div class="player">${['rewind', 'tostart', 'back', 'stop', 'play', 'toend', 'ffwd'].map(n => `<button aria-label="${n}"><ui-icon name="${n}"></ui-icon></button>`).join('')}</div>
<input type="range" aria-label="Speed" min="0" max="100" value="51">
<button class="loop" aria-label="Repeat"><ui-icon name="loop"></ui-icon></button><button class="rev" aria-label="Reverse at end"><ui-icon name="loopback"></ui-icon></button>`);

/* ---------- timeline: positions are time values on a 15 s track ---------- */
const at = t => `left:${t / 15 * 100}%`;
define('time-line', `
:host{display:block;background:#fcfcfd;flex:none}
.lane{display:flex;height:68px;border-bottom:1px solid #c6c8ca}
.track{position:relative;flex:1;margin:0 38px 0 27px}
.wire{position:absolute;left:0;right:0;top:41px;height:1px;background:#b9bbbd}
.key{position:absolute;top:40px;margin-left:-3px;line-height:0}
.cursor{position:absolute;top:0;bottom:0;border-left:1px dashed #8b8d8f}
.tag{position:absolute;left:0;top:42px;color:#a3a5a7}
.vs{width:11px;display:flex;flex-direction:column;background:#e0e1e2;border-left:1px solid #c6c8ca}
.vs span{height:10px;background:#fafafa;display:flex;align-items:center;justify-content:center}.vs i{flex:25}.vs b{flex:23;background:#fbfbfc;border:solid #c6c8ca;border-width:1px 0}
.ruler{display:flex;height:15px;margin-right:35px;padding:0 9px 0 25px;box-shadow:35px 0 #eeeff0}
.ruler span{flex:1 1 0;width:0;display:flex;align-items:center;justify-content:center;color:#2f3133}
.ruler .d::before{content:"";width:1px;height:2px;background:#55585a}.ruler .h::before{content:"";width:1px;height:7px;background:#55585a}
.mark{display:flex;height:11px;border-bottom:1px solid #d3d5d7;border-top:1px solid #f0f1f2}
.mark div{position:relative;flex:1;margin:0 48px 0 29px}
.mark span{position:absolute;display:flex;align-items:center;gap:5px;transform:translateX(-100%)}
.mark svg{display:block}`, `
<div class="lane"><div class="track"><div class="wire"></div>
<span class="cursor" style="left:0"></span><span class="cursor" style="${at(7.92)}"></span>
${[0, 2, 3.1, 9, 11.3, 12, 15].map(t => `<span class="key" style="${at(t)}"><svg width="7" height="7"><path d="M.5.500h6L3.500 6z" fill="#fff" stroke="#a3a5a7" stroke-width=".8"/></svg></span>`).join('')}<span class="tag">Kfs2.1</span></div>
<div class="vs"><span><svg width="5" height="3"><path d="M0 3h5L2.500 0z" fill="#8b8d8f"/></svg></span><i></i><b></b><span><svg width="5" height="3"><path d="M0 0h5L2.500 3z" fill="#8b8d8f"/></svg></span></div></div>
<div class="ruler">${Array.from({ length: 151 }, (_, i) => i % 10 === 0 ? `<span>${i / 10}</span>` : `<span class="${i % 5 ? 'd' : 'h'}"></span>`).join('')}</div>
<div class="mark"><div><span style="${at(7.98)}">7.920<svg width="8" height="9"><path d="M4 0l4 9H0z" fill="#0c0ccc"/></svg></span></div></div>
<h-scroll></h-scroll>`);

/* ---------- 3D model ---------- */
const hole = (x, y) => `<g transform="translate(${x} ${y})"><ellipse rx="34" ry="19" fill="#00a000" transform="rotate(4)"/><path d="M-34-2C-30-20-8-20 4-19L-4-2-22 12C-30 8-34 4-34-2z" fill="#007800"/><path d="M6-25h15l-3 22H8z" fill="#4cf04c" opacity=".7"/><path d="M-22 14C-18 0 8-5 32 3 32 13 10 20-10 19z" fill="#f4f8f6"/></g>`;
define('lock-model', `:host{display:block;position:absolute;inset:0}svg{width:100%;height:100%;display:block}`, `
<svg viewBox="-447 -228 3378 1245" preserveAspectRatio="xMidYMid meet" role="img" aria-label="Lock hasp assembly">
<defs>
<linearGradient id="rod" gradientUnits="userSpaceOnUse" x1="240" y1="108" x2="205" y2="242"><stop offset="0" stop-color="#8c94a2"/><stop offset=".35" stop-color="#a3aab8"/><stop offset=".6" stop-color="#8f95a3"/><stop offset="1" stop-color="#6c717c"/></linearGradient>
<linearGradient id="rod2" gradientUnits="userSpaceOnUse" x1="1250" y1="392" x2="1215" y2="526"><stop offset="0" stop-color="#8c94a2"/><stop offset=".35" stop-color="#a3a9b8"/><stop offset="1" stop-color="#747a86"/></linearGradient>
<linearGradient id="collar" gradientUnits="userSpaceOnUse" x1="340" y1="95" x2="286" y2="310"><stop offset="0" stop-color="#00dc00"/><stop offset=".2" stop-color="#00fa00"/><stop offset=".75" stop-color="#00f500"/><stop offset=".9" stop-color="#00b400"/><stop offset="1" stop-color="#006400"/></linearGradient>
<linearGradient id="cover" gradientUnits="userSpaceOnUse" x1="700" y1="262" x2="657" y2="412"><stop offset="0" stop-color="#00e600"/><stop offset=".15" stop-color="#0f0"/><stop offset=".55" stop-color="#00f800"/><stop offset=".8" stop-color="#00b800"/><stop offset="1" stop-color="#006400"/></linearGradient>
<linearGradient id="plate" gradientUnits="userSpaceOnUse" x1="657" y1="400" x2="630" y2="490"><stop offset="0" stop-color="#005a00"/><stop offset=".25" stop-color="#008000"/><stop offset=".7" stop-color="#00dc00"/><stop offset="1" stop-color="#0f0"/></linearGradient>
<linearGradient id="tube2" gradientUnits="userSpaceOnUse" x1="1500" y1="425" x2="1445" y2="632"><stop offset="0" stop-color="#00dc00"/><stop offset=".2" stop-color="#0f0"/><stop offset=".7" stop-color="#00f600"/><stop offset=".88" stop-color="#00b400"/><stop offset="1" stop-color="#006000"/></linearGradient>
<linearGradient id="plate2" gradientUnits="userSpaceOnUse" x1="1445" y1="622" x2="1427" y2="690"><stop offset="0" stop-color="#005a00"/><stop offset=".4" stop-color="#00a800"/><stop offset="1" stop-color="#0f0"/></linearGradient>
<linearGradient id="rc" gradientUnits="userSpaceOnUse" x1="1150" y1="332" x2="1098" y2="536"><stop offset="0" stop-color="#00dc00"/><stop offset=".2" stop-color="#0f0"/><stop offset=".7" stop-color="#00f500"/><stop offset=".88" stop-color="#00b400"/><stop offset="1" stop-color="#006400"/></linearGradient>
<linearGradient id="irod" gradientUnits="userSpaceOnUse" x1="700" y1="240" x2="663" y2="380"><stop offset="0" stop-color="#959ba9"/><stop offset=".35" stop-color="#a3a9b6"/><stop offset="1" stop-color="#70757f"/></linearGradient>
<linearGradient id="stem"><stop offset="0" stop-color="#747b86"/><stop offset=".4" stop-color="#8f97a4"/><stop offset="1" stop-color="#646a75"/></linearGradient>
<radialGradient id="ball" cx=".38" cy=".39" r=".66"><stop offset="0" stop-color="#fff"/><stop offset=".14" stop-color="#b5bfca"/><stop offset=".5" stop-color="#9aa5b3"/><stop offset=".8" stop-color="#78818e"/><stop offset="1" stop-color="#525964"/></radialGradient>
<linearGradient id="bore" x1="0" y1="0" x2="1" y2="0"><stop offset="0" stop-color="#00b800"/><stop offset=".5" stop-color="#00e600"/><stop offset="1" stop-color="#00f800"/></linearGradient>
<linearGradient id="side" x1="0" y1="0" x2="0" y2="1"><stop offset="0" stop-color="#006800"/><stop offset="1" stop-color="#009c00"/></linearGradient>
</defs>
<!-- first base plate -->
<path d="M1205 540L1282 590 1125 738C1090 768 1050 765 1000 752L190 528C160 515 160 490 168 470L300 480z" fill="#008e00"/>
<path d="M1180 500L1250 510 1285 588 1130 730 1100 738z" fill="url(#side)"/>
<path d="M258 290C262 350 250 385 222 412 200 432 185 440 172 458 158 485 172 508 192 514L1000 738C1045 752 1080 745 1100 732L1165 680C1200 645 1212 590 1205 545L1100 450 380 300z" fill="url(#plate)"/>
<path d="M1195 540C1205 600 1190 640 1150 680L1085 735 1100 732 1165 680C1200 645 1212 590 1205 545z" fill="#00c400"/>
<ellipse cx="1050" cy="738" rx="14" ry="8" fill="#7dff7d" opacity=".5"/>
<!-- rod end -->
<path d="M140 80L270 115 225 247 108 215C80 195 76 165 84 140 92 110 115 88 140 80z" fill="url(#rod)"/>
<path d="M140 80C110 90 80 120 80 160 82 190 92 205 108 215 85 185 88 115 148 82z" fill="#7f8796"/>
<!-- back of the tube -->
<path d="M300 92L1235 350 1180 540 400 320z" fill="#00cc00"/>
<path d="M420 150L1070 326 1062 346 400 172z" fill="#007200"/>
<path d="M430 138L1080 318 1076 326 440 152z" fill="#00d800"/>
<path d="M372 300L1040 480 1036 510 378 322z" fill="#00ef00"/>
<path d="M418 158L1066 340 1022 474 372 292 370 200z" fill="url(#irod)"/>
<path d="M372 290L1022 472 1021 478 374 298z" fill="#007000"/>
<!-- handle -->
<path d="M887 180L950 180 960 340 898 340z" fill="url(#stem)"/>
<circle cx="911" cy="124" r="74" fill="url(#ball)"/>
<!-- front cover -->
<path d="M480 203L925 325C950 330 964 345 963 370 962 410 970 440 970 497L430 339C412 322 413 285 416 265 424 230 448 200 480 203z" fill="url(#cover)"/>
<path d="M940 330C962 340 966 350 963 380 962 410 972 440 971 497L964 494C962 440 955 400 957 370 956 350 952 340 930 328z" fill="#00a000"/>
<!-- left collar -->
<path d="M440 128L478 142C448 142 424 152 404 165 380 190 370 225 371 262 372 290 380 300 394 306L378 327 340 300 340 180z" fill="#008200"/>
<path d="M300 90L440 128C385 135 355 200 356 250 356 290 364 315 378 326L262 298C235 290 218 250 221 210 224 145 262 90 300 90z" fill="url(#collar)"/>
<!-- right collar and the rod leaving it -->
<path d="M1215 346L1240 352C1258 360 1265 375 1263 400L1200 555 1180 550C1140 530 1140 370 1215 346z" fill="#009e00"/>
<path d="M1205 380C1235 362 1255 366 1262 395L1255 560 1195 545C1165 510 1170 410 1205 380z" fill="#006e00"/>
<path d="M1072 318L1215 346C1175 362 1152 430 1155 490 1156 520 1165 540 1180 550L1040 513C1022 485 1020 440 1030 400 1040 350 1050 320 1072 318z" fill="url(#rc)"/>
<path d="M1220 350C1180 372 1160 430 1160 490 1162 520 1170 540 1182 550L1195 545C1170 510 1172 410 1225 362z" fill="#00b800"/>
<path d="M1212 383L1290 404 1250 535 1186 518C1172 480 1178 410 1212 383z" fill="url(#rod2)"/>
<!-- second base -->
<path d="M1565 650L1610 600 1727 595V615L1500 838C1470 865 1430 868 1400 860L1215 808C1190 800 1185 780 1190 762z" fill="#008200"/>
<path d="M1640 545L1705 560C1730 570 1735 590 1718 606L1660 660C1640 678 1618 650 1616 615 1620 590 1636 570 1640 545z" fill="#00f000"/>
<path d="M1727 590C1728 600 1722 604 1718 608L1660 660C1640 678 1625 660 1620 645 1625 665 1640 680 1665 672L1727 612z" fill="#00b400"/>
<path d="M1281 580C1285 650 1262 685 1235 710L1200 740C1182 765 1188 785 1212 793L1400 848C1435 858 1460 848 1480 834L1540 775C1575 735 1582 700 1576 650L1500 600z" fill="url(#plate2)"/>
<path d="M1562 655C1568 710 1550 745 1520 775L1455 842C1465 845 1472 840 1480 834L1540 775C1575 735 1582 700 1576 652z" fill="#00c400"/>
<ellipse cx="1420" cy="846" rx="14" ry="8" fill="#7dff7d" opacity=".5"/>
<path d="M1325 378L1605 452C1642 465 1640 530 1630 570 1618 615 1585 645 1545 648L1280 586C1245 560 1240 520 1244 480 1250 425 1285 376 1325 378z" fill="url(#tube2)"/>
<path d="M1605 452C1642 465 1640 530 1630 570 1618 615 1585 648 1545 648 1510 630 1520 560 1530 530 1545 485 1575 452 1605 452z" fill="#00b400"/>
<path d="M1598 458C1560 462 1530 520 1526 580 1526 615 1532 635 1546 642" fill="none" stroke="#00c800" stroke-width="8"/>
<ellipse cx="1589" cy="554" rx="41" ry="82" transform="rotate(11 1589 554)" fill="url(#bore)" stroke="#007400" stroke-width="3"/>
${hole(255, 475)}${hole(642, 582)}${hole(1028, 690)}${hole(1337, 778)}
</svg>`);

/* ---------- in-graphics toolbar ---------- */
define('view-toolbar', `
:host{display:flex;align-items:center;width:249px;height:21px;background:#f8f9fa;border:1px solid #b9bdc0;padding:0 1px;position:relative}
button{display:flex;align-items:center;justify-content:center;flex:1;height:19px}
.m{background:linear-gradient(135deg,#0000 50%,#444 50%) right bottom 4px/3px 3px no-repeat}`,
['refit', 'zin', 'zout', 'repaint', 'shade', 'display3', 'orient', 'viewmgr', 'datum', 'dplane', 'daxis', 'dpoint', 'dcsys', 'spin'].map((n, i) => `<button aria-label="${n}" class="${[4, 5, 6, 8].includes(i) ? 'm' : ''}"><ui-icon name="${n}"></ui-icon></button>`).join(''));

/* ---------- capture dialog ---------- */
define('drop-down', `
:host{display:flex;position:relative;height:16px}
select{appearance:none;flex:1;border:1px solid #b3b7ba;background:linear-gradient(#b3b7ba,#b3b7ba) right 9px top/1px 100% no-repeat #f6f7f8;padding:0 12px 0 5px;line-height:12px}
ui-icon{position:absolute;right:3px;top:7px;pointer-events:none}`,
  el => `<select aria-label="${el.getAttribute('label')}"><option>${el.getAttribute('value')}</option></select><ui-icon name="caret"></ui-icon>`);
define('capture-dialog', `
:host{display:block;position:absolute;top:30px;right:102px;width:187px;background:#eeeff1;border:2px solid #f5f6f7}
header{display:flex;align-items:center;justify-content:center;position:relative;height:18px;background:#e5e6e8;color:#a3a5a7}
header button{position:absolute;right:7px;top:6px;display:flex}
form{padding:11px 6px 0 6px}
fieldset{border:1px solid #cdd0d2;margin:0 0 5px;padding:4px 8px 8px;min-width:0}
legend{padding:0 3px;line-height:10px;height:10px}
input[type=text]{height:16px;border:1px solid #b9bdc0;background:#fff;padding:0 2px;min-width:0}
input[type=checkbox]{appearance:none;width:9px;height:9px;border:1px solid #8b8d8f;background:#fff;flex:none}
input[type=checkbox]:checked{background:#fff url('data:image/svg+xml,<svg xmlns="http://www.w3.org/2000/svg" viewBox="0 0 7 7"><path d="M1 3.500L3 5.500 6 1" fill="none" stroke="%23222" stroke-width="1.300"/></svg>')}
.row{display:flex;gap:3px}.row input{flex:1}
.row button{width:24px;height:16px;border:1px solid #b9bdc0;background:#fafafa;display:flex;align-items:center;justify-content:center}
.size{display:grid;grid-template-columns:27px 1fr auto;gap:3px;align-items:center;margin-right:-1px}
.size>label{text-align:right}
.chk{display:flex;align-items:center;gap:5px;height:13px}
.lock{margin:5px 0 0 31px}.q{margin-left:1px}
footer{display:flex;justify-content:flex-end;gap:5px;margin-top:9px;padding:7px 6px 6px;border-top:1px solid #d0d3d5}
footer button{width:38px;height:16px;background:#fdfdfd;border:1px solid #b9bdc0}
footer .ok{background:#a0dffc;border-color:#8fc4dc}`, `
<header>Capture<button aria-label="Close"><ui-icon name="xbold"></ui-icon></button></header>
<form>
<fieldset><legend>Name</legend><div class="row"><input type="text" aria-label="Name" value="LOCK_HASP.avi"><button type="button" aria-label="Browse"><ui-icon name="folder"></ui-icon></button></div></fieldset>
<fieldset><legend>Type</legend><drop-down label="Type" value="AVI"></drop-down></fieldset>
<fieldset><legend>Image size</legend><div class="size"><label for="w">Width:</label><input type="text" id="w" value="1980"><span>pixels</span><label for="h">Height:</label><input type="text" id="h" value="724"><span>pixels</span></div><label class="chk lock"><input type="checkbox" checked>Lock aspect ratio</label></fieldset>
<fieldset><legend>Quality</legend><label class="chk q"><input type="checkbox">Photorender frames</label></fieldset>
<fieldset><legend>Frame rate</legend><drop-down label="Frame rate" value="25 fps"></drop-down></fieldset>
<fieldset><legend>Compression</legend><drop-down label="Compression" value="Uncompressed"></drop-down></fieldset>
</form>
<footer><button class="ok">OK</button><button>Cancel</button></footer>`);

define('graphics-view', `
:host{display:flex;justify-content:center;align-items:flex-start;position:relative;flex:1;background:#e8eaed;padding-top:8px;min-height:0}`,
`<lock-model></lock-model><view-toolbar></view-toolbar><capture-dialog></capture-dialog>`);

/* ---------- status bar ---------- */
define('status-bar', `
:host{display:flex;align-items:center;height:25px;border-top:2px solid #98999b;background:#eeeff1;padding:1px 1px 0 4px}
button{display:flex;align-items:center;justify-content:center}
i{width:1px;height:14px;background:#b9bbbd}
.on{width:15px;height:15px;background:#dcdddf;border:1px solid #b9bbbd}
.left{display:flex;align-items:center;gap:6px}.left i{margin-left:2px}
.right{display:flex;align-items:center;margin-left:auto}
.find{width:29px;height:17px;background:#fdfdfd;border:1px solid #c5c7c9;gap:7px;margin-left:28px}
.box{width:27px;height:18px;background:#e3e4e5;border:1px solid #d3d5d7;margin:0 64px 0 3px}
drop-down{width:118px}ui-icon[name=grip]{align-self:flex-end;margin:5px 0 0 2px}`, `
<div class="left"><button class="on" aria-label="Tree"><ui-icon name="bar"></ui-icon></button><button aria-label="Browser"><ui-icon name="globe"></ui-icon></button><button aria-label="Full screen"><ui-icon name="panel"></ui-icon></button><i></i></div>
<div class="right"><i></i><ui-icon name="sel" style="margin-left:3px"></ui-icon><button class="find" aria-label="Find"><ui-icon name="binoc"></ui-icon><ui-icon name="caret"></ui-icon></button><button class="box" aria-label="Select box"><ui-icon name="box3"></ui-icon></button><drop-down label="Selection filter" value="Geometry"></drop-down><ui-icon name="grip"></ui-icon></div>`);

define('creo-app', `
:host{display:flex;flex-direction:column;min-height:100vh;padding:14px 0;background:#000}
.window{flex:1;display:flex;flex-direction:column;border:solid #9d9d9d;border-width:2px 3px;background:#eeeff1}
main{flex:1;display:flex;padding-top:1px;min-height:0}
.work{flex:1;display:flex;flex-direction:column;min-width:0}`, `
<div class="window"><title-bar></title-bar><ribbon-tabs></ribbon-tabs><ribbon-bar></ribbon-bar>
<main><side-panel></side-panel><div class="work"><playback-bar></playback-bar><time-line></time-line><graphics-view></graphics-view></div></main>
<status-bar></status-bar></div>`);
</script>
</body>
</html>
